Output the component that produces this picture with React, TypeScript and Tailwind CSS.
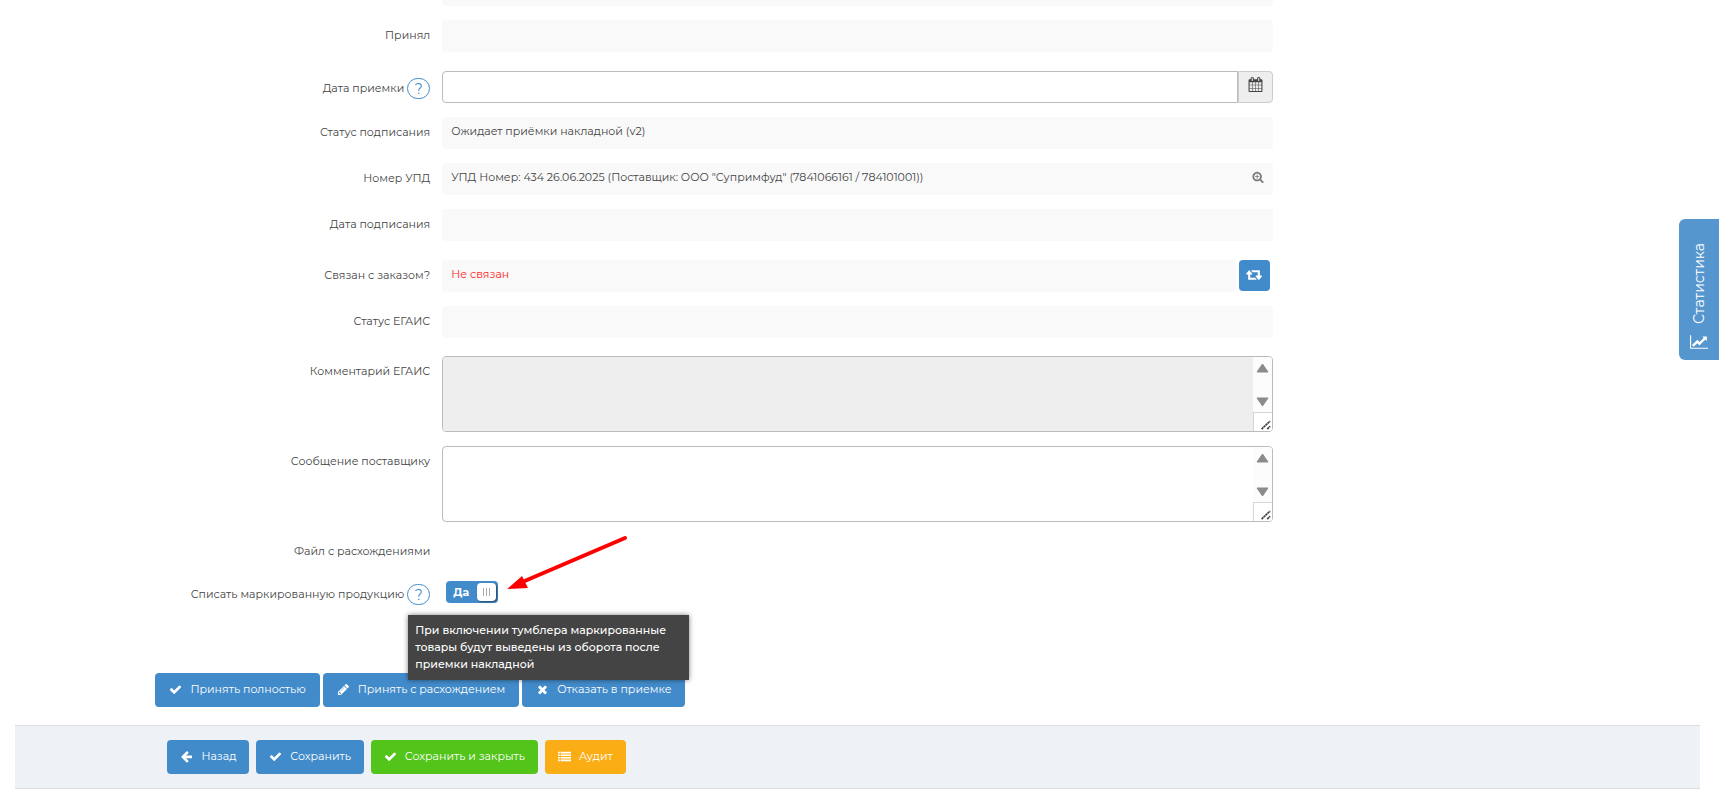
import { useState } from "react"
import type { ReactNode } from "react"
import { clsx } from "clsx"

const paths = {
  check:
    "M1671 566q0 40-28 68l-724 724-136 136q-28 28-68 28t-68-28l-136-136-362-362q-28-28-28-68t28-68l136-136q28-28 68-28t68 28l294 295 656-657q28-28 68-28t68 28l136 136q28 28 28 68z",
  pencil:
    "M491 1536l91-91-235-235-91 91v107h128v128h107zm523-928q0-22-22-22-10 0-17 7l-542 542q-7 7-7 17 0 22 22 22 10 0 17-7l542-542q7-7 7-17zm-54-192l416 416-832 832h-416v-416zm683 96q0 53-37 90l-166 166-416-416 166-165q36-38 90-38 53 0 91 38l235 234q37 39 37 91z",
  times:
    "M1490 1322q0 40-28 68l-136 136q-28 28-68 28t-68-28l-294-294-294 294q-28 28-68 28t-68-28l-136-136q-28-28-28-68t28-68l294-294-294-294q-28-28-28-68t28-68l136-136q28-28 68-28t68 28l294 294 294-294q28-28 68-28t68 28l136 136q28 28 28 68t-28 68l-294 294 294 294q28 28 28 68z",
  arrowLeft:
    "M1664 896v128q0 53-32.5 90.5t-84.5 37.5h-704l293 294q38 36 38 90t-38 90l-75 76q-37 37-90 37-52 0-91-37l-651-652q-37-37-37-90 0-52 37-91l651-650q38-38 91-38 52 0 90 38l75 74q38 38 38 91t-38 91l-293 293h704q52 0 84.5 37.5t32.5 90.5z",
  list: "M0 256h256v224h-256zM352 256h1440v224h-1440zM0 608h256v224h-256zM352 608h1440v224h-1440zM0 960h256v224h-256zM352 960h1440v224h-1440zM0 1312h256v224h-256zM352 1312h1440v224h-1440z",
  calendar:
    "M192 1664h288v-288h-288v288zm352 0h320v-288h-320v288zm-352-352h288v-320h-288v320zm352 0h320v-320h-320v320zm-352-384h288v-288h-288v288zm736 736h320v-288h-320v288zm-384-736h320v-288h-320v288zm768 736h288v-288h-288v288zm-384-352h320v-320h-320v320zm-352-864v-288q0-13-9.5-22.5t-22.5-9.5h-64q-13 0-22.5 9.5t-9.5 22.5v288q0 13 9.5 22.5t22.5 9.5h64q13 0 22.5-9.5t9.5-22.5zm736 864h288v-320h-288v320zm-384-384h320v-288h-320v288zm384 0h288v-288h-288v288zm32-480v-288q0-13-9.5-22.5t-22.5-9.5h-64q-13 0-22.5 9.5t-9.5 22.5v288q0 13 9.5 22.5t22.5 9.5h64q13 0 22.5-9.5t9.5-22.5zm384-64v1280q0 52-38 90t-90 38h-1408q-52 0-90-38t-38-90v-1280q0-52 38-90t90-38h128v-96q0-66 47-113t113-47h64q66 0 113 47t47 113v96h384v-96q0-66 47-113t113-47h64q66 0 113 47t47 113v96h128q52 0 90 38t38 90z",
  retweet:
    "M1280 1504q0 13-9.5 22.5t-22.5 9.5h-960q-8 0-13.5-2t-9-7-5.5-8-3-11.5-1-11.5v-600h-192q-26 0-45-19t-19-45q0-24 15-41l320-384q19-22 49-22t49 22l320 384q15 17 15 41 0 26-19 45t-45 19h-192v384h576q16 0 25 11l160 192q7 10 7 21zm640-416q0 24-15 41l-320 384q-20 23-49 23t-49-23l-320-384q-15-17-15-41 0-26 19-45t45-19h192v-384h-576q-16 0-25-12l-160-192q-7-9-7-20 0-13 9.5-22.5t22.5-9.5h960q8 0 13.5 2t9 7 5.5 8 3 11.5 1 11.5v600h192q26 0 45 19t19 45z",
  searchPlus:
    "M1088 800v64q0 13-9.5 22.5t-22.5 9.5h-224v224q0 13-9.5 22.5t-22.5 9.5h-64q-13 0-22.5-9.5t-9.5-22.5v-224h-224q-13 0-22.5-9.5t-9.5-22.5v-64q0-13 9.5-22.5t22.5-9.5h224v-224q0-13 9.5-22.5t22.5-9.5h64q13 0 22.5 9.5t9.5 22.5v224h224q13 0 22.5 9.5t9.5 22.5zm128 32q0-185-131.5-316.5t-316.5-131.5-316.5 131.5-131.5 316.5 131.5 316.5 316.5 131.5 316.5-131.5 131.5-316.5zm512 832q0 53-37.5 90.5t-90.5 37.5q-54 0-90-38l-343-342q-179 124-399 124-143 0-273.5-55.5t-225-150-150-225-55.5-273.5 55.5-273.5 150-225 225-150 273.5-55.5 273.5 55.5 225 150 150 225 55.5 273.5q0 220-124 399l343 343q37 37 37 90z",
  lineChart:
    "M2048 1536v128h-2048v-1536h128v1408h1920zm-128-1248v435q0 21-19.5 29.5t-35.5-7.5l-121-121-633 633q-10 10-23 10t-23-10l-233-233-416 416-192-192 585-585q10-10 23-10t23 10l233 233 464-464-121-121q-16-16-7.5-35.5t29.5-19.5h435q14 0 23 9t9 23z",
}

interface IconProps {
  name: keyof typeof paths
  className?: string
  width?: number
}

const Icon = ({ name, className, width = 1792 }: IconProps) => (
  <svg viewBox={`0 0 ${width} 1792`} fill="currentColor" aria-hidden="true" className={clsx("shrink-0", className)}>
    <path d={paths[name]} />
  </svg>
)

const Help = () => (
  <span className="flex h-[21px] w-[23px] shrink-0 items-center justify-center rounded-full border border-[#428bca] text-sm leading-none text-[#428bca]">
    ?
  </span>
)

interface RowProps {
  label: string
  id: string
  help?: boolean
  className?: string
  children?: ReactNode
}

const Row = ({ label, id, help, className, children }: RowProps) => (
  <div className={clsx("grid min-h-8 grid-cols-12", className)}>
    <div className={clsx("col-span-3 flex items-start justify-end gap-[3px] px-1.5", help ? "pt-[7px]" : "pt-1.5")}>
      <label htmlFor={id} className={clsx("text-right leading-[18px]", help && "pt-px")}>
        {label}
      </label>
      {help && <Help />}
    </div>
    <div className="col-span-6 px-1.5">{children}</div>
  </div>
)

const ReadOnly = ({ id, children, className }: { id: string; children?: ReactNode; className?: string }) => (
  <output
    id={id}
    className={clsx("flex h-8 flex-1 items-start justify-between rounded bg-[#f9f9f9] px-[9px] pt-[5px] leading-[18px]", className)}
  >
    {children}
  </output>
)

const TextBox = ({ id, disabled }: { id: string; disabled?: boolean }) => (
  <div className="flex h-[76px] overflow-hidden rounded border border-[#bbb]">
    <textarea id={id} disabled={disabled} className="min-w-0 flex-1 resize-none px-2 py-1 outline-none disabled:bg-[#eee]" />
    {/* полоса прокрутки */}
    <div className="flex w-[19px] flex-col items-center bg-[#fcfcfc]" aria-hidden="true">
      <svg viewBox="0 0 19 55" className="h-[55px] w-[19px]" fill="#8b8b8b" stroke="#8b8b8b" strokeLinejoin="round">
        <path d="M9.500 7l5.500 8h-11z" />
        <path d="M9.500 49l5.500-8h-11z" />
      </svg>
      <svg viewBox="0 0 19 19" className="h-[19px] w-[19px] border-t border-l border-[#d5d5d5] bg-white" stroke="#444" strokeWidth="1.800">
        <path d="M8 17l9-8.500M14 17l3-3" strokeDasharray="2.500 0.400" />
      </svg>
    </div>
  </div>
)

interface ActionProps {
  icon: keyof typeof paths
  className?: string
  children: string
}

const Action = ({ icon, className = "bg-[#428bca] px-3.5", children }: ActionProps) => (
  <button
    type="button"
    className={clsx("flex h-[34px] items-center gap-2 rounded pb-px whitespace-nowrap text-white", className)}
  >
    <Icon name={icon} className="size-[13px]" />
    {children}
  </button>
)

export default function App() {
  const [writeOff, setWriteOff] = useState(true)

  return (
    <div className="min-h-screen overflow-x-hidden bg-white font-['Montserrat','Inter',sans-serif] text-[11px] text-[#444]">
      <form className="pr-[21px] pl-[15px]" onSubmit={(e) => e.preventDefault()}>
        <div className="grid grid-cols-12">
          <div className="col-span-6 col-start-4 px-1.5">
            <div className="h-1.5 rounded-b bg-[#f9f9f9]" />
          </div>
        </div>

        <Row label="Принял" id="accepted" className="mt-3.5">
          <ReadOnly id="accepted" />
        </Row>
        <Row label="Дата приемки" id="date" help className="mt-[19px]">
          <div className="flex h-8">
            <input id="date" type="text" className="min-w-0 flex-1 rounded-l border border-[#bbb] px-2 outline-none" />
            <button
              type="button"
              aria-label="Календарь"
              className="flex w-[35px] justify-center rounded-r border border-[#ccc] bg-[#eee] pt-[5px]"
            >
              <Icon name="calendar" className="size-[15px]" />
            </button>
          </div>
        </Row>
        <Row label="Статус подписания" id="sign-status" className="mt-3.5">
          <ReadOnly id="sign-status">Ожидает приёмки накладной (v2)</ReadOnly>
        </Row>
        <Row label="Номер УПД" id="upd" className="mt-3.5">
          <ReadOnly id="upd">
            УПД Номер: 434 26.06.2025 (Поставщик: ООО "Супримфуд" (7841066161 / 784101001))
            <Icon name="searchPlus" className="mt-[3px] size-3 text-[#777]" />
          </ReadOnly>
        </Row>
        <Row label="Дата подписания" id="sign-date" className="mt-3.5">
          <ReadOnly id="sign-date" />
        </Row>
        <Row label="Связан с заказом?" id="order" className="mt-[19px]">
          <div className="flex gap-[3px] pr-[3px]">
            <ReadOnly id="order" className="text-[#f22]">
              Не связан
            </ReadOnly>
            <button
              type="button"
              aria-label="Связать"
              className="flex h-[31px] w-[31px] justify-center rounded bg-[#428bca] pt-[7px] text-white"
            >
              <Icon name="retweet" width={1920} className="h-[15px] w-4" />
            </button>
          </div>
        </Row>
        <Row label="Статус ЕГАИС" id="egais" className="mt-3.5">
          <ReadOnly id="egais" />
        </Row>
        <Row label="Комментарий ЕГАИС" id="egais-comment" className="mt-[18px]">
          <TextBox id="egais-comment" disabled />
        </Row>
        <Row label="Сообщение поставщику" id="message" className="mt-3.5">
          <TextBox id="message" />
        </Row>
        <Row label="Файл с расхождениями" id="file" className="mt-3.5">
          <output id="file" />
        </Row>
        <Row label="Списать маркированную продукцию" id="write-off" help className="mt-[9px]">
          <div className="relative flex pt-1 pl-1">
            <label className="flex h-[22px] w-[52px] cursor-pointer items-center justify-between rounded bg-[#428bca] pr-0.5 pl-[7px] font-bold text-white">
              <input
                id="write-off"
                type="checkbox"
                className="sr-only"
                checked={writeOff}
                onChange={(e) => setWriteOff(e.target.checked)}
              />
              {writeOff ? "Да" : "Нет"}
              <span className="flex h-[18px] w-[19px] items-center justify-center gap-0.5 rounded bg-white shadow-[1px_1px_2px_rgba(0,0,0,0.5)]">
                <i className="h-2 w-px bg-[#aaa]" />
                <i className="h-2 w-px bg-[#aaa]" />
                <i className="h-2 w-px bg-[#aaa]" />
              </span>
            </label>

            {/* стрелка-указатель */}
            <svg viewBox="0 0 122 56" className="absolute -top-11 left-16 h-14 w-[122px]" aria-hidden="true">
              <path d="M14 50L119 5" stroke="#f00" strokeWidth="4" strokeLinecap="round" />
              <path d="M1 56L16 43l6 12z" fill="#f00" />
            </svg>

            <div
              role="tooltip"
              className="absolute top-[38px] -left-[34px] z-10 w-[281px] bg-[#444] px-[7px] py-[7px] leading-[17px] font-medium text-white shadow-[0_0_5px_rgba(0,0,0,0.5)]"
            >
              При включении тумблера маркированные товары будут выведены из оборота после приемки накладной
            </div>
          </div>
        </Row>

        <div className="mt-16 grid grid-cols-12">
          <div className="col-span-11 col-start-2 flex gap-[3px]">
            <Action icon="check">Принять полностью</Action>
            <Action icon="pencil">Принять с расхождением</Action>
            <Action icon="times">Отказать в приемке</Action>
          </div>
        </div>

        <div className="mt-[18px] grid grid-cols-12 border-y border-[#ddd] bg-[#eef1f6] py-3.5">
          <div className="col-span-11 col-start-2 flex gap-[7px] pl-3">
            <Action icon="arrowLeft" className="bg-[#428bca] px-[13px]">
              Назад
            </Action>
            <Action icon="check" className="bg-[#428bca] px-[13px]">
              Сохранить
            </Action>
            <Action icon="check" className="bg-[#52c41a] px-[13px]">
              Сохранить и закрыть
            </Action>
            <Action icon="list" className="bg-[#faad14] px-[13px]">
              Аудит
            </Action>
          </div>
        </div>
      </form>

      <button
        type="button"
        className="fixed top-[219px] right-0.5 flex h-[141px] w-10 flex-col items-center justify-end gap-2.5 rounded-l-md bg-[#5596cf] pb-2.5 text-sm text-white"
      >
        <span className="rotate-180 leading-5 [writing-mode:vertical-rl]">Статистика</span>
        <Icon name="lineChart" width={2048} className="h-4 w-[18px]" />
      </button>
    </div>
  )
}
